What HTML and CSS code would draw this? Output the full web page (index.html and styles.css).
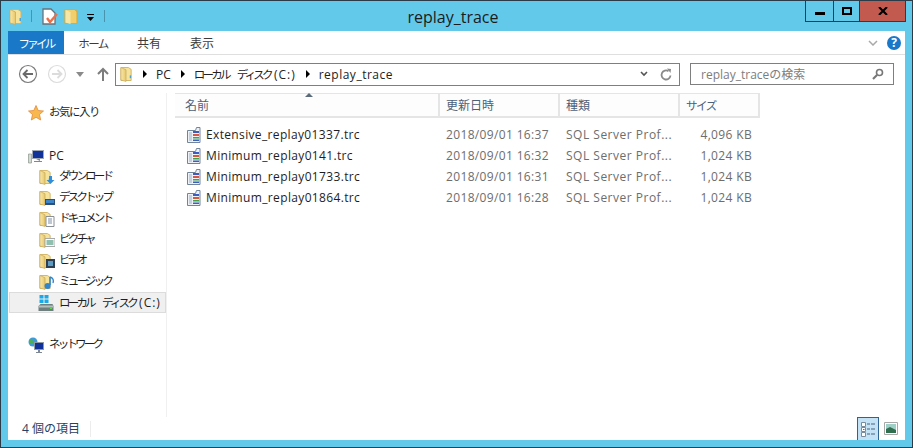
FILE: index.html
```html
<!DOCTYPE html>
<html lang="ja">

<head>
    <meta charset="UTF-8">
    <title>replay_trace</title>
    <link rel="stylesheet" href="styles.css">
</head>

<body>
    <svg class="defs" width="0" height="0">
        <defs>
            <linearGradient id="folder-fill" x1="0" y1="0" x2="1" y2="0">
                <stop offset="0" stop-color="#f8e9ad" />
                <stop offset="1" stop-color="#e8c668" />
            </linearGradient>
            <symbol id="folder" viewBox="0 0 14 17">
                <path d="M1 1.500h8l3 2v12H1z" fill="#f5e29b" stroke="#d3b365" />
                <path d="M1 1.500l5.500 2.500v12.500L1 15z" fill="url(#folder-fill)" stroke="#c4a75c" stroke-width=".7" />
                <path d="M10.500 10h1.500v3h-1.500z" fill="#4aa3d8" />
            </symbol>
            <symbol id="trace" viewBox="0 0 16 16">
                <path d="M1.500 3.500h8l1-3h3.500v15H1.500z" fill="#eef1f5" stroke="#71859a" />
                <path d="M3 5h3v9H3z" fill="#c3d0dd" />
                <path d="M7 4h6v2H7z" fill="#3d5cc0" />
                <path d="M7 7h6v2H7z" fill="#d8553f" />
                <path d="M7 10h6v1.500H7z" fill="#3ba348" />
                <path d="M7 12.500h6v1.500H7z" fill="#3d5cc0" />
            </symbol>
        </defs>
    </svg>

    <div class="window">
        <header class="titlebar">
            <div class="quick">
                <svg class="quick-folder"><use href="#folder" /></svg>
                <span class="quick-sep"></span>
                <svg class="quick-doc" viewBox="0 0 16 17">
                    <path d="M1 1h8l4 4v11H1z" fill="#fff" stroke="#68717a" stroke-width="1.300" />
                    <path d="M5 10l3 4 7-8" fill="none" stroke="#e8704a" stroke-width="2.400" />
                </svg>
                <svg class="quick-folder2" viewBox="0 0 14 17">
                    <path d="M1 1.500h10l2 2v12H1z" fill="#f1cf6d" stroke="#d9a93a" stroke-width="1.200" />
                    <path d="M1.500 2l5 2v12l-5-1.500z" fill="#f7e7a6" />
                </svg>
                <svg class="quick-more" viewBox="0 0 9 7">
                    <path d="M1 0h7v1H1z" fill="#000" />
                    <path d="M1 3h7L4.500 7z" fill="#000" />
                </svg>
                <span class="quick-sep"></span>
            </div>
            <h1 class="title">replay_trace</h1>
            <div class="controls">
                <div class="ctl ctl-min"><span class="min-bar"></span></div>
                <div class="ctl ctl-max"><span class="max-box"></span></div>
                <div class="ctl ctl-close">
                    <svg width="10" height="8" viewBox="0 0 10 8">
                        <path d="M1 0l4 4 4-4M1 8l4-4 4 4" fill="none" stroke="#000" stroke-width="2" />
                    </svg>
                </div>
            </div>
        </header>

        <div class="pane">
            <nav class="ribbon">
                <div class="tab tab-file"><span class="kana">ファイル</span></div>
                <div class="tab"><span class="kana-wide">ホーム</span></div>
                <div class="tab">共有</div>
                <div class="tab">表示</div>
                <div class="ribbon-right">
                    <svg class="ribbon-chevron" width="10" height="6" viewBox="0 0 10 6">
                        <path d="M1 1l4 4 4-4" fill="none" stroke="#a9a9a9" stroke-width="1.500" />
                    </svg>
                    <span class="help">?</span>
                </div>
            </nav>

            <div class="addressrow">
                <svg class="nav-round" width="20" height="20" viewBox="0 0 20 20">
                    <circle cx="10" cy="10" r="8.500" fill="#fff" stroke="#7a7a7a" stroke-width="1.200" />
                    <path d="M15 10H6M9.500 6L5.500 10l4 4" fill="none" stroke="#6a6a6a" stroke-width="1.800" />
                </svg>
                <svg class="nav-round nav-forward" width="20" height="20" viewBox="0 0 20 20">
                    <circle cx="10" cy="10" r="8.500" fill="#fff" stroke="#dcdcdc" stroke-width="1.200" />
                    <path d="M5 10h9M10.500 6l4 4-4 4" fill="none" stroke="#dcdcdc" stroke-width="1.800" />
                </svg>
                <svg class="nav-drop" width="8" height="5" viewBox="0 0 8 5">
                    <path d="M0 0h8L4 5z" fill="#8a8a8a" />
                </svg>
                <svg class="nav-up" width="12" height="14" viewBox="0 0 12 14">
                    <path d="M6 14V2M1 7l5-5 5 5" fill="none" stroke="#7d7d7d" stroke-width="2" />
                </svg>
                <div class="address">
                    <svg class="address-folder"><use href="#folder" /></svg>
                    <span class="crumb-arrow"></span>
                    <span>PC</span>
                    <span class="crumb-arrow"></span>
                    <span class="drive-name"><span class="kana">ローカル ディスク</span> <span class="drive-letter">(C:)</span></span>
                    <span class="crumb-arrow"></span>
                    <span class="crumb-last">replay_trace</span>
                    <div class="address-end">
                        <svg width="8" height="6" viewBox="0 0 8 6">
                            <path d="M1 1l3 3 3-3" fill="none" stroke="#555" stroke-width="1.600" />
                        </svg>
                        <svg width="12" height="13" viewBox="0 0 12 13">
                            <path d="M10.500 7.500a4.500 4.500 0 1 1-2-4.300" fill="none" stroke="#8a8a8a" stroke-width="1.800" />
                            <path d="M7 0.500l4 .5-.5 4z" fill="#8a8a8a" />
                        </svg>
                    </div>
                </div>
                <div class="search">
                    <span>replay_traceの検索</span>
                    <svg width="12" height="12" viewBox="0 0 12 12">
                        <circle cx="7.500" cy="4.500" r="3" fill="none" stroke="#777" stroke-width="1.600" />
                        <path d="M5 7l-4 4" stroke="#777" stroke-width="2.200" />
                    </svg>
                </div>
            </div>

            <div class="main">
                <aside class="sidebar">
                    <div class="side-item side-top">
                        <svg class="side-icon" viewBox="0 0 16 16">
                            <path d="M8 .5l2.200 5 5.300.5-4 3.500 1.200 5.500L8 12.300 3.300 15l1.200-5.500-4-3.500 5.300-.5z" fill="#f8b84e" stroke="#e08a3a" stroke-width=".8" />
                        </svg>
                        <span class="kana-wide">お気に入り</span>
                    </div>
                    <div class="side-item side-group">
                        <svg class="side-icon" viewBox="0 0 16 16">
                            <path d="M0.500 6h3v9h-3z" fill="#d5d9d5" stroke="#7a8a7a" stroke-width=".6" />
                            <path d="M4 2h12v9H4z" fill="#9fa8b4" />
                            <path d="M5 3h10v7H5z" fill="#10309a" />
                            <path d="M8 11h4v2H6v1h8v-1h-2" fill="#7d8894" />
                        </svg>
                        <span>PC</span>
                    </div>
                    <div class="side-item side-sub">
                        <svg class="side-icon" viewBox="0 0 16 16">
                            <use href="#folder" width="13" height="16" />
                            <path d="M10 7h3v4h2.500l-4 4-4-4H10z" fill="#2f8fdc" />
                        </svg>
                        <span class="kana">ダウンロード</span>
                    </div>
                    <div class="side-item side-sub">
                        <svg class="side-icon" viewBox="0 0 16 16">
                            <use href="#folder" width="13" height="16" />
                            <path d="M6 9h10v6H6z" fill="#2d4f78" />
                            <path d="M7 10h8v3H7z" fill="#3f86c8" />
                        </svg>
                        <span class="kana">デスクトップ</span>
                    </div>
                    <div class="side-item side-sub">
                        <svg class="side-icon" viewBox="0 0 16 16">
                            <use href="#folder" width="13" height="16" />
                            <path d="M7 5.500h8v10H7z" fill="#fff" stroke="#8a8f96" />
                            <path d="M9 8h4M9 10h4M9 12h4" stroke="#7f8fa5" />
                        </svg>
                        <span class="kana">ドキュメント</span>
                    </div>
                    <div class="side-item side-sub">
                        <svg class="side-icon" viewBox="0 0 16 16">
                            <use href="#folder" width="13" height="16" />
                            <path d="M6 6.500h10v8H6z" fill="#fff" stroke="#a8a8a8" />
                            <path d="M7.500 8h7v5h-7z" fill="#8fc0b0" />
                        </svg>
                        <span class="kana">ピクチャ</span>
                    </div>
                    <div class="side-item side-sub">
                        <svg class="side-icon" viewBox="0 0 16 16">
                            <use href="#folder" width="13" height="16" />
                            <path d="M7 6h9v9H7z" fill="#2e3f52" />
                            <path d="M9 8h5v5H9z" fill="#5f9cc4" />
                        </svg>
                        <span class="kana">ビデオ</span>
                    </div>
                    <div class="side-item side-sub">
                        <svg class="side-icon" viewBox="0 0 16 16">
                            <use href="#folder" width="13" height="16" />
                            <path d="M11 3v8" stroke="#2f86cc" stroke-width="1.600" />
                            <circle cx="8.500" cy="12" r="3" fill="#2f86cc" />
                            <path d="M11 3c3 1 4 3 3 6" fill="none" stroke="#2f86cc" stroke-width="1.400" />
                        </svg>
                        <span class="kana">ミュージック</span>
                    </div>
                    <div class="side-item side-drive">
                        <svg class="side-icon" viewBox="0 0 16 16">
                            <path d="M1.500 0h4v3.500h-4zM6.500 0h4v3.500h-4zM1.500 4.500h4V8h-4zM6.500 4.500h4V8h-4z" fill="#19a8e8" />
                            <path d="M0.500 11l2-2h12l1 2v5H.5z" fill="#6f7f80" />
                            <path d="M1 10.500h14v2H1z" fill="#b4c0be" />
                            <path d="M12 13h2v1h-2z" fill="#54e03e" />
                        </svg>
                        <span class="drive-name"><span class="kana">ローカル ディスク</span> <span class="drive-letter">(C:)</span></span>
                    </div>
                    <div class="side-item side-group">
                        <svg class="side-icon" viewBox="0 0 16 16">
                            <circle cx="5" cy="5" r="4.500" fill="#3f9ad8" />
                            <path d="M2 2c2 0 3 1 3 3S3 7 1 6z" fill="#4caf50" />
                            <path d="M6 5h10v8H6z" fill="#8e99a6" />
                            <path d="M7 6h8v6H7z" fill="#10309a" />
                            <path d="M10 13h2v2h2v1H8v-1h2z" fill="#7d8894" />
                        </svg>
                        <span class="kana">ネットワーク</span>
                    </div>
                </aside>

                <section class="files">
                    <div class="sort-mark"><span></span></div>
                    <div class="filehead">
                        <div class="col-name">名前</div>
                        <div class="col-date">更新日時</div>
                        <div class="col-type">種類</div>
                        <div class="col-size"><span class="kana-wide">サイズ</span></div>
                    </div>
                    <div class="filelist">
                        <div class="filerow">
                            <div class="cell-name"><svg class="file-icon"><use href="#trace" /></svg>Extensive_replay01337.trc</div>
                            <div class="cell-date">2018/09/01 16:37</div>
                            <div class="cell-type">SQL Server Prof...</div>
                            <div class="cell-size">4,096 KB</div>
                        </div>
                        <div class="filerow">
                            <div class="cell-name"><svg class="file-icon"><use href="#trace" /></svg>Minimum_replay0141.trc</div>
                            <div class="cell-date">2018/09/01 16:32</div>
                            <div class="cell-type">SQL Server Prof...</div>
                            <div class="cell-size">1,024 KB</div>
                        </div>
                        <div class="filerow">
                            <div class="cell-name"><svg class="file-icon"><use href="#trace" /></svg>Minimum_replay01733.trc</div>
                            <div class="cell-date">2018/09/01 16:31</div>
                            <div class="cell-type">SQL Server Prof...</div>
                            <div class="cell-size">1,024 KB</div>
                        </div>
                        <div class="filerow">
                            <div class="cell-name"><svg class="file-icon"><use href="#trace" /></svg>Minimum_replay01864.trc</div>
                            <div class="cell-date">2018/09/01 16:28</div>
                            <div class="cell-type">SQL Server Prof...</div>
                            <div class="cell-size">1,024 KB</div>
                        </div>
                    </div>
                </section>
            </div>

            <footer class="statusbar">
                <div class="status-count">4 個の項目</div>
                <div class="status-views">
                    <div class="view-btn view-active">
                        <svg width="15" height="15" viewBox="0 0 15 15">
                            <path d="M.5 .5h4v4h-4zM.5 5.500h4v4h-4zM.5 10.500h4v4h-4z" fill="#fff" stroke="#7a8a9a" />
                            <path d="M2 7h1.500v1H2z" fill="#d8402a" />
                            <path d="M6 2h3M10 2h4M6 7h3M10 7h4M6 12h3M10 12h4" stroke="#4a6078" />
                        </svg>
                    </div>
                    <div class="view-btn">
                        <svg width="14" height="13" viewBox="0 0 14 13">
                            <path d="M.5 .5h13v12H.5z" fill="#fff" stroke="#a8a8a8" />
                            <path d="M2 2h10v9H2z" fill="#9fd0c8" />
                            <path d="M2 7l4-2 6 3v3H2z" fill="#2f6f4f" />
                        </svg>
                    </div>
                </div>
            </footer>
        </div>
    </div>
</body>

</html>
```

FILE: styles.css
```css
* {
    box-sizing: border-box;
}

html,
body {
    margin: 0;
    padding: 0;
    height: 100%;
    overflow: hidden;
}

body {
    font-family: 'Open Sans', 'Noto Sans CJK JP', sans-serif;
    font-size: 12px;
    color: #1a1a1a;
}

.defs {
    position: absolute;
}

/* the installed kana run wider than the original UI font */
.kana {
    font-size: 11.5px;
    letter-spacing: -2.8px;
    word-spacing: 8px;
}

.kana-wide {
    font-size: 11.5px;
    letter-spacing: -1.5px;
}

.drive-name {
    white-space: nowrap;
}

.drive-letter {
    letter-spacing: 1px;
}

.window {
    width: 913px;
    height: 448px;
    background-color: #63c9ea;
    border: 1px solid #2b3c48;
    display: flex;
    flex-direction: column;
    padding: 0 7px 7px 7px;
}

/* title bar */
.titlebar {
    height: 30px;
    flex: none;
    display: grid;
    grid-template-columns: 1fr auto 1fr;
}

.quick {
    display: flex;
    align-items: center;
    padding: 0 0 0 1px;
    height: 30px;
}

.quick-folder {
    width: 14px;
    height: 17px;
}

.quick-sep {
    width: 1px;
    height: 12px;
    background-color: #4a93ad;
    margin: 0 10px 0 8px;
}

.quick-doc {
    width: 16px;
    height: 17px;
}

.quick-folder2 {
    width: 14px;
    height: 17px;
    margin-left: 6px;
}

.quick-more {
    width: 9px;
    height: 7px;
    margin: 2px 0 0 8px;
}

.quick-more + .quick-sep {
    margin-left: 9px;
}

.title {
    margin: 0;
    font-size: 16px;
    font-weight: 400;
    line-height: 32px;
    color: #1c1c1c;
    padding-right: 7px;
}

.controls {
    display: flex;
    justify-self: end;
    height: 21px;
    margin-right: -1px;
    border: 1px solid #2b3c48;
    border-top: none;
}

.ctl {
    display: flex;
    align-items: center;
    justify-content: center;
    height: 100%;
}

.ctl-min {
    width: 28px;
    border-right: 1px solid #2b3c48;
}

.ctl-max {
    width: 26px;
    border-right: 1px solid #2b3c48;
}

.ctl-close {
    width: 45px;
    background-color: #c25a50;
}

.min-bar {
    width: 10px;
    height: 3px;
    background-color: #000;
    margin-top: 5px;
}

.max-box {
    width: 10px;
    height: 8px;
    border: 2px solid #000;
}

/* white pane */
.pane {
    flex: 1;
    min-height: 0;
    background-color: #fff;
    display: flex;
    flex-direction: column;
}

.ribbon {
    height: 24px;
    flex: none;
    display: flex;
    align-items: stretch;
    border-bottom: 1px solid #dfdfdf;
}

.tab {
    width: 58px;
    line-height: 25px;
    text-align: center;
    color: #3b3b3b;
}

.tab-file {
    width: 56px;
    height: 23px;
    background-color: #1a78c8;
    color: #fff;
}

.tab:nth-child(3) {
    width: 54px;
}

.tab:nth-child(4) {
    width: 52px;
}

.ribbon-right {
    margin-left: auto;
    display: flex;
    align-items: center;
    gap: 9px;
    padding-right: 4px;
}

.help {
    width: 14px;
    height: 14px;
    border-radius: 50%;
    background-color: #1a78c8;
    color: #fff;
    font-weight: 700;
    font-size: 12px;
    line-height: 14px;
    text-align: center;
}

.addressrow {
    height: 38px;
    flex: none;
    display: flex;
    align-items: center;
    padding: 0 11px 0 10px;
}

.nav-forward {
    margin-left: 9px;
}

.nav-drop {
    margin-left: 9px;
}

.nav-up {
    margin-left: 13px;
}

.address {
    width: 565px;
    height: 23px;
    margin-left: 6px;
    border: 1px solid #7f7f7f;
    display: flex;
    align-items: center;
    padding: 0 7px 0 4px;
    color: #222;
}

.address-folder {
    width: 13px;
    height: 16px;
}

.crumb-arrow {
    width: 0;
    height: 0;
    border-left: 4px solid #000;
    border-top: 4px solid transparent;
    border-bottom: 4px solid transparent;
    margin: 0 9px 0 10px;
}

.crumb-last {
    letter-spacing: .5px;
}

.address-end {
    margin-left: auto;
    display: flex;
    align-items: center;
    gap: 12px;
}

.search {
    width: 204px;
    height: 22px;
    margin-left: 10px;
    border: 1px solid #7f7f7f;
    display: flex;
    align-items: center;
    justify-content: space-between;
    padding: 0 9px 0 10px;
    color: #7d7d7d;
}

.main {
    flex: 1;
    min-height: 0;
    display: flex;
}

/* navigation pane */
.sidebar {
    width: 159px;
    flex: none;
    padding: 9px 0 0 0;
    border-right: 1px solid #f0f0f0;
}

.side-item {
    height: 21px;
    display: flex;
    align-items: center;
    color: #1e1e1e;
    padding-left: 20px;
}

.side-item .kana,
.side-item .kana-wide {
    padding-bottom: 3px;
}

.side-item .drive-name {
    padding-bottom: 1px;
}

.side-group {
    margin-top: 22px;
}

.side-group:last-child {
    margin-top: 21px;
}

.side-icon {
    width: 16px;
    height: 16px;
    margin-right: 5px;
    flex: none;
}

.side-sub {
    padding-left: 31px;
}

.side-sub .side-icon {
    margin-right: 4px;
}

.side-drive {
    padding-left: 28px;
    margin-left: 1px;
    background-color: #f0f0f0;
    border: 1px solid #dcdcdc;
}

/* file list */
.files {
    flex: 1;
    min-width: 0;
    padding-left: 8px;
    position: relative;
}

.sort-mark {
    position: absolute;
    left: 138px;
    top: 0;
    height: 5px;
}

.sort-mark span {
    display: block;
    width: 0;
    height: 0;
    border-left: 4px solid transparent;
    border-right: 4px solid transparent;
    border-bottom: 4px solid #5b6b7a;
}

.filehead,
.filerow {
    display: grid;
    grid-template-columns: 265px 120px 120px 80px;
}

.filehead {
    height: 25px;
    width: 585px;
    border-top: 1px solid #e5e5e5;
    border-bottom: 2px solid #e5e5e5;
    color: #4d6079;
    line-height: 24px;
    background-color: #fdfdfd;
}

.filehead > div {
    border-right: 2px solid #e5e5e5;
    padding-left: 6px;
}

.filehead .col-name {
    padding-left: 10px;
}

.filelist {
    padding-top: 6px;
}

.filerow {
    height: 21px;
    line-height: 21px;
    color: #6d6d6d;
    letter-spacing: .35px;
}

.cell-name {
    display: flex;
    align-items: center;
    padding-left: 11px;
    color: #1e1e1e;
}

.file-icon {
    width: 16px;
    height: 16px;
    margin-right: 4px;
}

.cell-date,
.cell-type {
    padding-left: 6px;
}

.cell-type {
    letter-spacing: .5px;
}

.cell-size {
    text-align: right;
    padding-right: 8px;
}

/* status bar */
.statusbar {
    height: 23px;
    flex: none;
    display: flex;
    align-items: center;
    justify-content: space-between;
}

.status-count {
    width: 83px;
    padding-left: 14px;
    border-right: 1px solid #ececec;
    color: #2c3f62;
    line-height: 16px;
}

.status-views {
    display: flex;
    align-items: center;
    height: 100%;
    gap: 5px;
    padding-right: 7px;
}

.view-btn {
    display: flex;
    align-items: center;
    justify-content: center;
}

.view-active {
    width: 22px;
    height: 23px;
    background-color: #c4e2f6;
    border: 1px solid #2f6492;
    border-bottom: none;
}
```
